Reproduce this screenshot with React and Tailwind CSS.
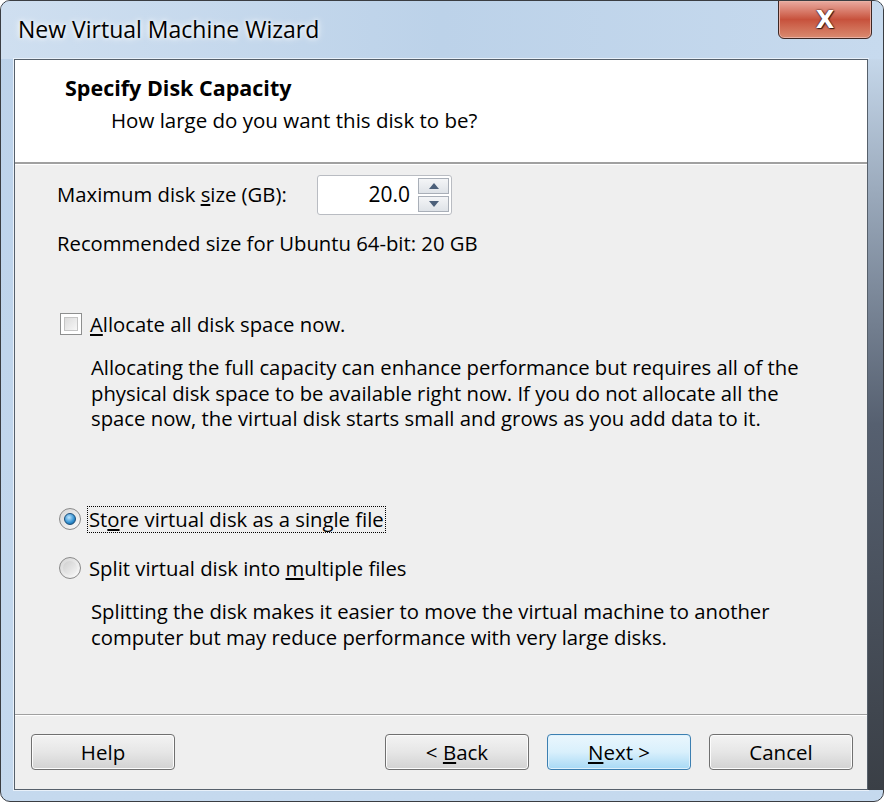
import React, { useState } from "react";

const font = { fontFamily: '"Open Sans", "Noto Sans", "Liberation Sans", sans-serif' };

const WinButton = ({ children, primary, className = "" }) => (
  <button
    className={`h-[36px] w-[144px] rounded-[4px] border text-[20.5px] leading-none text-black ${
      primary
        ? "border-[#3c7fb1] bg-linear-to-b from-[#eaf6fd] via-[#d9f0fc] to-[#a7d9f5] shadow-[inset_0_0_0_1px_#dff2fd]"
        : "border-[#707070] bg-linear-to-b from-[#f3f3f3] via-[#e6e6e6] to-[#d2d2d2] shadow-[inset_0_0_0_1px_#fcfcfc]"
    } ${className}`}
  >
    {children}
  </button>
);

const Checkbox = ({ checked, onChange }) => (
  <button
    onClick={onChange}
    className="w-[22px] h-[22px] border border-[#8e8f8f] bg-white p-[3px] shrink-0"
  >
    <span className="block w-full h-full border border-[#c4c4c4] bg-linear-to-br from-[#dcdcdc] to-[#f7f7f7]">
      {checked && (
        <svg viewBox="0 0 12 12" className="w-full h-full">
          <path d="M2 6l3 3 5-7" fill="none" stroke="#2a4a7a" strokeWidth="2" />
        </svg>
      )}
    </span>
  </button>
);

const Radio = ({ checked, onClick }) => (
  <button
    onClick={onClick}
    className="w-[22px] h-[22px] rounded-full border border-[#8a8a8a] bg-linear-to-br from-[#d6d6d6] to-[#fbfbfb] flex items-center justify-center shrink-0"
  >
    {checked ? (
      <span className="w-[12px] h-[12px] rounded-full border border-[#1c4e7a] bg-[radial-gradient(circle_at_40%_35%,#bfe6ff,#2f8fd0_60%,#16507f)]" />
    ) : (
      <span className="w-[14px] h-[14px] rounded-full bg-linear-to-br from-[#cfcfcf] to-[#f4f4f4]" />
    )}
  </button>
);

export default function App() {
  const [size, setSize] = useState(20);
  const [allocate, setAllocate] = useState(false);
  const [mode, setMode] = useState("single");

  return (
    <div className="w-[884px] h-[802px] bg-white" style={font}>
      <div className="w-full h-full rounded-[10px] border border-[#3a3d42] bg-linear-to-b from-[#bcd2ea] to-[#c5d9ee] flex flex-col overflow-hidden">
        {/* Title bar */}
        <div className="h-[58px] shrink-0 flex items-start bg-linear-to-r from-[#cfdff0] via-[#bcd2e9] to-[#c7daee]">
          <span className="mt-[13px] ml-[17px] text-[23px] leading-[30px] text-black [text-shadow:0_0_8px_#ffffff,0_0_4px_#ffffff]">
            New Virtual Machine Wizard
          </span>
          <div className="flex-1" />
          <button className="mt-[-1px] mr-[11px] w-[94px] h-[39px] rounded-b-[6px] border border-[#3d2724] bg-linear-to-b from-[#e9aaa0] via-[#c7513c] to-[#d98a70] shadow-[inset_0_0_0_1px_#eab1a4] flex items-center justify-center">
            <span className="text-[24px] font-bold leading-none text-white [text-shadow:0_0_1px_#3a1a14,0_0_2px_#3a1a14,1px_1px_1px_#3a1a14]" style={{ fontFamily: '"DejaVu Sans", sans-serif' }}>
              X
            </span>
          </button>
        </div>

        {/* Client row with side frames */}
        <div className="flex-1 flex">
          <div className="w-[13px] shrink-0" />
          <div className="flex-1 flex flex-col border border-[#56606b] shadow-[0_0_0_1px_#e9f1fa] bg-[#efefef] text-black">
            {/* Header */}
            <div className="h-[104px] shrink-0 bg-white border-b-2 border-b-[#a0a0a0] pt-[14px]">
              <div className="pl-[50px] text-[21.5px] font-bold leading-[28px]">Specify Disk Capacity</div>
              <div className="pl-[96px] mt-[4px] text-[20.5px] leading-[28px]">How large do you want this disk to be?</div>
            </div>
            <div className="h-px bg-white shrink-0" />

            {/* Content */}
            <div className="flex-1 pl-[42px] text-[20.3px] leading-[25.5px]">
              <div className="mt-[10px] flex items-center">
                <span className="w-[260px]">
                  Maximum disk <span className="underline underline-offset-2">s</span>ize (GB):
                </span>
                <div className="h-[40px] w-[135px] rounded-[3px] border border-[#b9bcc2] bg-white flex items-center">
                  <span className="flex-1 text-right pr-[8px] text-[21px]">{size.toFixed(1)}</span>
                  <div className="flex flex-col gap-[2px] mr-[2px]">
                    <button
                      onClick={() => setSize(size + 1)}
                      className="w-[31px] h-[16px] border border-[#a9afb8] bg-linear-to-b from-[#f4f5f7] to-[#dfe3e8] flex items-center justify-center"
                    >
                      <svg viewBox="0 0 10 6" className="w-[10px] h-[6px]">
                        <path d="M0 6L5 0L10 6Z" fill="#4c607a" />
                      </svg>
                    </button>
                    <button
                      onClick={() => setSize(Math.max(1, size - 1))}
                      className="w-[31px] h-[16px] border border-[#a9afb8] bg-linear-to-b from-[#f4f5f7] to-[#dfe3e8] flex items-center justify-center"
                    >
                      <svg viewBox="0 0 10 6" className="w-[10px] h-[6px]">
                        <path d="M0 0L10 0L5 6Z" fill="#4c607a" />
                      </svg>
                    </button>
                  </div>
                </div>
              </div>

              <div className="mt-[16px]">Recommended size for Ubuntu 64-bit: 20 GB</div>

              <div className="mt-[55px] flex items-center gap-[8px] pl-[3px]">
                <Checkbox checked={allocate} onChange={() => setAllocate(!allocate)} />
                <span>
                  <span className="underline underline-offset-2">A</span>llocate all disk space now.
                </span>
              </div>
              <p className="mt-[18px] ml-[34px] w-[740px]">
                Allocating the full capacity can enhance performance but requires all of the physical disk space to be available right now. If you do not allocate all the space now, the virtual disk starts small and grows as you add data to it.
              </p>

              <div className="mt-[74px] flex items-center gap-[6px] pl-[2px]">
                <Radio checked={mode === "single"} onClick={() => setMode("single")} />
                <span className="border border-dotted border-black px-[1px] leading-[25px]">
                  St<span className="underline underline-offset-2">o</span>re virtual disk as a single file
                </span>
              </div>
              <div className="mt-[23px] flex items-center gap-[8px] pl-[2px]">
                <Radio checked={mode === "split"} onClick={() => setMode("split")} />
                <span>
                  Split virtual disk into <span className="underline underline-offset-2">m</span>ultiple files
                </span>
              </div>
              <p className="mt-[17px] ml-[34px] w-[740px] leading-[26px]">
                Splitting the disk makes it easier to move the virtual machine to another computer but may reduce performance with very large disks.
              </p>
            </div>

            {/* Footer */}
            <div className="h-[75px] shrink-0 border-t border-t-[#a0a0a0] shadow-[inset_0_1px_0_#ffffff] flex items-start pt-[19px] pl-[16px] pr-[14px]">
              <WinButton>Help</WinButton>
              <div className="flex-1" />
              <WinButton>
                &lt; <span className="underline underline-offset-2">B</span>ack
              </WinButton>
              <WinButton primary className="ml-[18px]">
                <span className="underline underline-offset-2">N</span>ext &gt;
              </WinButton>
              <WinButton className="ml-[18px]">Cancel</WinButton>
            </div>
          </div>
          <div className="w-[15px] shrink-0 bg-linear-to-b from-[#c5d7ea] via-[#566070] to-[#3a3f46]" />
        </div>
        <div className="h-[11px] shrink-0" />
      </div>
    </div>
  );
}
